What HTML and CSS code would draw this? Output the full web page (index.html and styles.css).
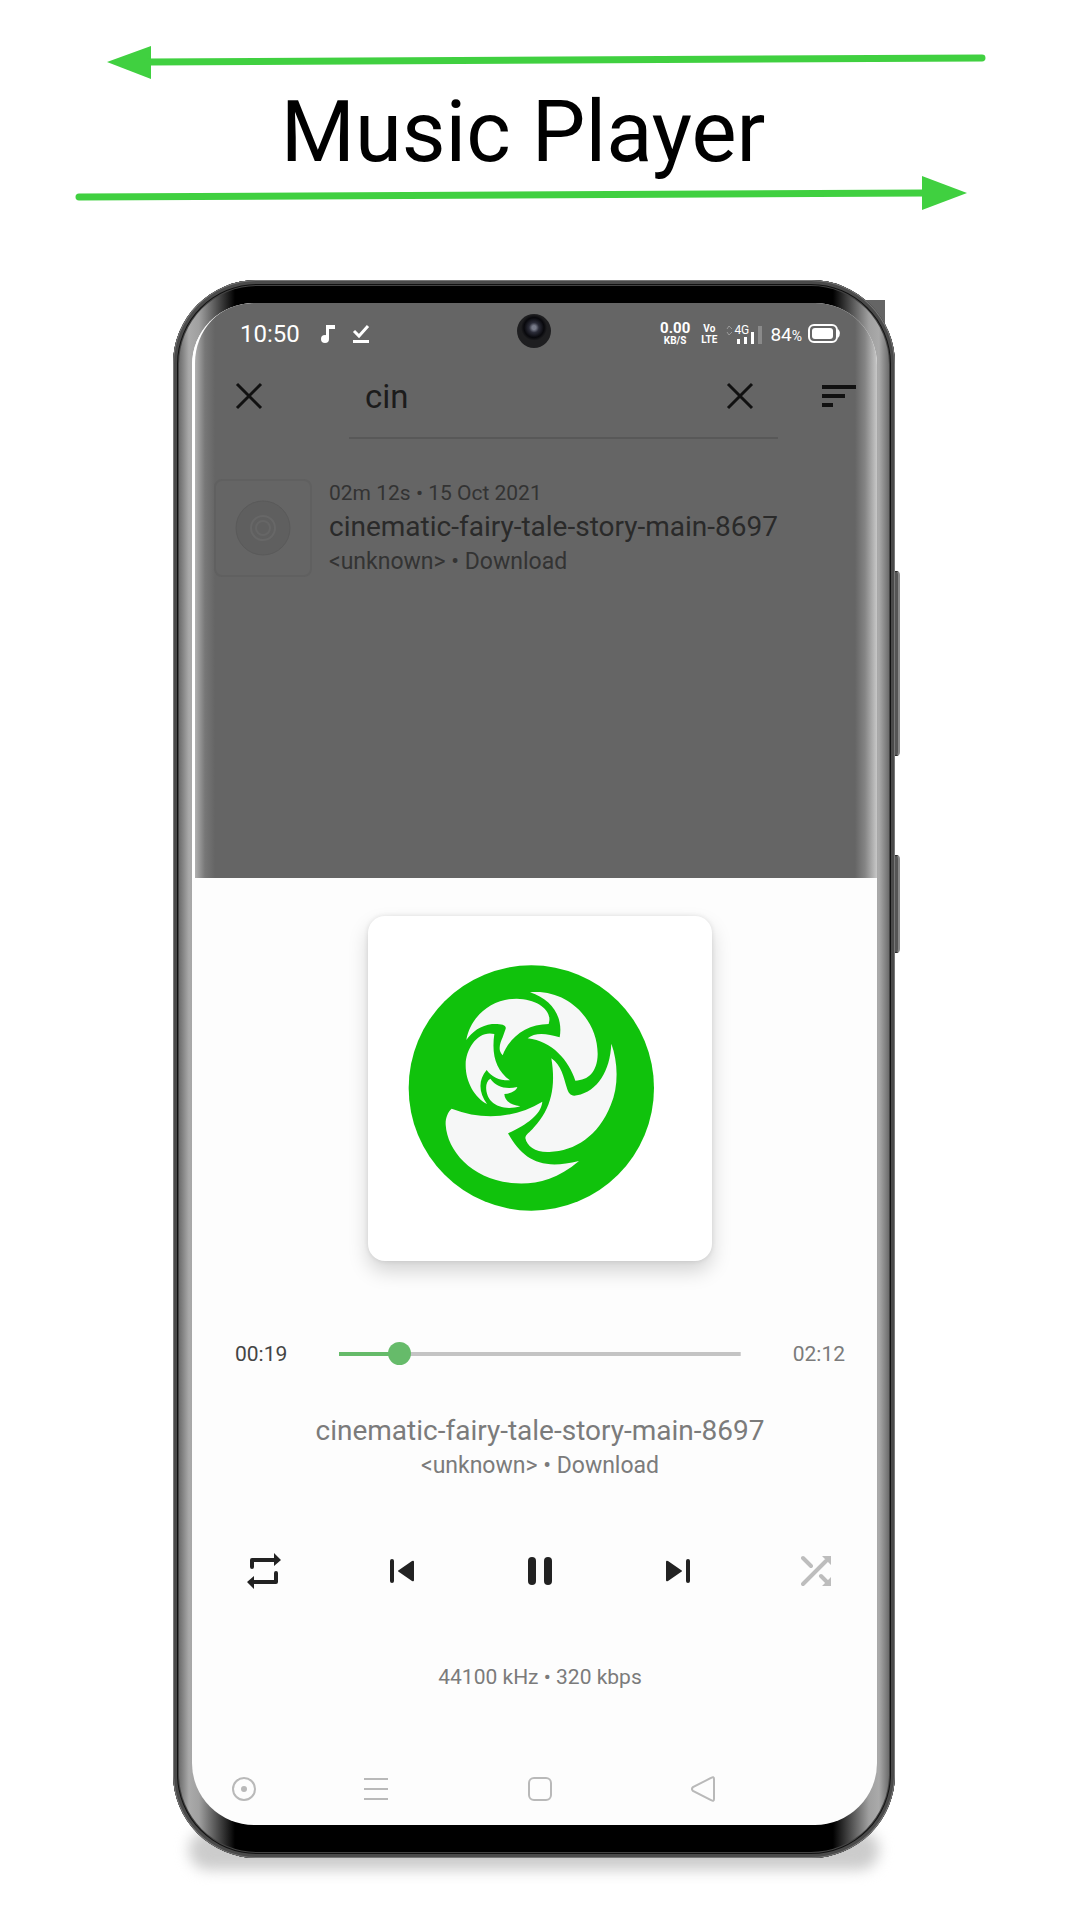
FILE: index.html
```html
<!DOCTYPE html>
<html lang="en">
<head>
<meta charset="utf-8">
<meta name="viewport" content="width=device-width, initial-scale=1">
<title>Music Player</title>
<link rel="stylesheet" href="styles.css">
</head>
<body>
<header class="banner">
  <svg class="arrow" viewBox="0 0 1080 34" aria-hidden="true"><path d="M107 16 151 0V33Z"/><path class="shaft" d="M148 16 982 12"/></svg>
  <h1 class="banner-title">Music Player</h1>
  <svg class="arrow" viewBox="0 0 1080 34" aria-hidden="true"><path d="M967 17 922 0V34Z"/><path class="shaft" d="M79 21 925 17"/></svg>
</header>

<main class="phone">
  <div class="edge-notch"></div>
  <div class="side-key volume"></div>
  <div class="side-key power"></div>
  <div class="bezel">
    <div class="screen">
      <section class="library">
        <div class="status-bar">
          <span class="clock">10:50</span>
          <svg class="note" width="16" height="20" viewBox="0 0 16 20" aria-hidden="true"><circle cx="5" cy="15" r="4"/><path d="M6 1h9v4H9v10H6Z"/></svg>
          <svg class="done" width="18" height="20" viewBox="0 0 18 20" aria-hidden="true"><path d="M2 7 7 12 16 2" fill="none" stroke="#fff" stroke-width="3"/><path d="M1 16h16v3H1Z"/></svg>
          <span class="net-speed"><b>0.00</b><small>KB/S</small></span>
          <span class="volte"><b>Vo</b><b>LTE</b></span>
          <span class="signal">
            <svg width="38" height="22" viewBox="0 0 38 22" aria-hidden="true"><path d="M1 6 3 3 6 6M1 9 3 12 6 9" fill="none" stroke="#999"/><path d="M11 16h3v5h-3ZM18 14h3v7h-3ZM25 9h3v12h-3Z"/><path d="M32 3h4v18h-4Z" fill="#8a8a8a"/></svg>
            <span class="net-type">4G</span>
          </span>
          <span class="charge">84<small>%</small></span>
          <svg class="battery" width="34" height="20" viewBox="0 0 34 20" aria-hidden="true"><rect x="1" y="1" width="28" height="17" rx="5" fill="none" stroke="#fff" stroke-width="2"/><rect x="4" y="4" width="21" height="11" rx="3"/><path d="M30 5q4 4 0 9Z"/></svg>
        </div>
        <span class="camera"></span>

        <div class="toolbar">
          <button class="icon-button" aria-label="Close"><svg width="28" height="28" viewBox="0 0 28 28"><path class="cross" d="M2 2 26 26M26 2 2 26"/></svg></button>
          <div class="search">
            <input class="search-input" type="text" value="cin" aria-label="Search">
            <button class="icon-button" aria-label="Clear"><svg width="28" height="28" viewBox="0 0 28 28"><path class="cross" d="M2 2 26 26M26 2 2 26"/></svg></button>
          </div>
          <button class="icon-button" aria-label="Sort"><svg width="34" height="24" viewBox="0 0 34 24"><path d="M0 1h34v4H0ZM0 10h23v4H0ZM0 19h11v4H0Z"/></svg></button>
        </div>

        <article class="track">
          <div class="thumb"><svg width="56" height="56" viewBox="0 0 56 56" aria-hidden="true"><circle cx="28" cy="28" r="27" fill="#5f5f5f" stroke="#5a5a5a"/><circle cx="28" cy="28" r="12" fill="none" stroke="#676767" stroke-width="2"/><circle cx="28" cy="28" r="7" fill="none" stroke="#666" stroke-width="2"/></svg></div>
          <div class="track-text">
            <p class="meta">02m 12s • 15 Oct 2021</p>
            <h2 class="title">cinematic-fairy-tale-story-main-8697</h2>
            <p class="artist">&lt;unknown&gt; • Download</p>
          </div>
        </article>
      </section>

      <section class="player">
        <div class="cover">
          <svg viewBox="54 48 1032 1034" aria-hidden="true">
            <circle cx="544" cy="564" r="368" fill="#10c20c"/>
            <g fill="#f6f7f7">
              <path d="M349 420C362 348 425 296 500 296C558 297 602 327 598 362L596 372C530 372 478 412 458 466C443 451 449 432 458 412L467 386C470 374 452 371 426 372C393 376 366 395 349 420Z"/>
              <path d="M540 277C655 266 744 361 743 463C742 516 715 541 676 542C657 482 606 423 533 415C553 397 589 399 629 412C640 351 607 299 540 277Z"/>
              <path d="M784 431C804 486 807 558 782 616C746 707 675 754 598 756C557 758 531 739 526 714C527 703 538 699 552 682C605 626 618 558 604 475C634 495 641 533 650 562C656 583 664 590 681 586C743 573 780 514 784 431Z"/>
              <path d="M305 626C400 663 495 654 577 605C573 644 532 673 474 700C520 781 573 811 687 783C615 844 548 855 484 849C365 836 292 753 287 674C286 656 293 636 305 626Z"/>
              <path d="M433 402C385 390 348 444 347 493C346 544 373 592 411 612C386 578 384 540 410 510C426 532 448 542 480 541C438 510 424 465 433 402Z"/>
              <path d="M421 536C401 548 407 586 424 604C446 626 480 628 511 619C480 615 464 601 463 582C483 580 498 573 502 561C467 568 440 562 421 536Z"/>
            </g>
          </svg>
        </div>

        <div class="seek">
          <span class="time elapsed">00:19</span>
          <input class="slider" type="range" min="0" max="132" value="17" aria-label="Position">
          <span class="time">02:12</span>
        </div>

        <div class="now-playing">
          <h2 class="title">cinematic-fairy-tale-story-main-8697</h2>
          <p class="artist">&lt;unknown&gt; • Download</p>
        </div>

        <div class="controls">
          <button class="icon-button" aria-label="Repeat"><svg width="34" height="36" viewBox="0 0 34 36"><path d="M5 14V7H28M29 20V29H6" fill="none" stroke="#222" stroke-width="4" stroke-linecap="round" stroke-linejoin="round"/><path d="M27 0 34 7 27 13ZM7 23 0 29 7 36Z"/></svg></button>
          <button class="icon-button" aria-label="Previous"><svg width="24" height="24" viewBox="0 0 24 24"><rect x="0" y="0" width="4" height="24" rx="2"/><path d="M22 2q2-1 2 1v18q0 2-2 1L9 13q-2-1 0-2Z"/></svg></button>
          <button class="icon-button" aria-label="Pause"><svg width="24" height="28" viewBox="0 0 24 28"><rect width="8" height="28" rx="4"/><rect x="16" width="8" height="28" rx="4"/></svg></button>
          <button class="icon-button" aria-label="Next"><svg width="24" height="24" viewBox="0 0 24 24"><rect x="20" y="0" width="4" height="24" rx="2"/><path d="M2 2Q0 1 0 3v18q0 2 2 1L15 13q2-1 0-2Z"/></svg></button>
          <button class="icon-button off" aria-label="Shuffle"><svg width="30" height="32" viewBox="0 0 30 32"><path d="M2 3 10 11M2 29 25 6M20 21 26 27" fill="none" stroke="#bdbdbd" stroke-width="4" stroke-linecap="round"/><path d="M21 1h9v9ZM30 22v9h-9Z"/></svg></button>
        </div>

        <p class="quality">44100 kHz • 320 kbps</p>

        <nav class="nav-bar" aria-label="System">
          <button class="icon-button" aria-label="Assist"><svg width="24" height="24" viewBox="0 0 24 24"><circle cx="12" cy="12" r="11"/><circle cx="12" cy="12" r="3" fill="#b9b9b9" stroke="none"/></svg></button>
          <button class="icon-button" aria-label="Recents"><svg width="24" height="24" viewBox="0 0 24 24"><path d="M0 2H24M0 12H24M0 22H24"/></svg></button>
          <button class="icon-button" aria-label="Home"><svg width="24" height="24" viewBox="0 0 24 24"><rect x="1" y="1" width="22" height="22" rx="5"/></svg></button>
          <button class="icon-button" aria-label="Back"><svg width="24" height="26" viewBox="0 0 24 26"><path d="M20 2Q23 0 23 3V23Q23 26 20 24L2 15Q0 13 2 11Z"/></svg></button>
        </nav>
      </section>
    </div>
  </div>
</main>
</body>
</html>
```
FILE: styles.css
```css
* { box-sizing: border-box; }

body {
  margin: 0;
  padding: 46px 0 60px;
  background: #fff;
  font-family: Roboto, "Noto Sans", sans-serif;
  color: #7b7b7b;
}

h1, h2, p { margin: 0; font-weight: 400; }

/* Banner */
.banner { text-align: center; }
.arrow { display: block; width: 100%; height: auto; fill: #40d040; }
.shaft { fill: none; stroke: #40d040; stroke-width: 7; stroke-linecap: round; }
.banner-title {
  margin: 10px 0 1px;
  padding-right: 34px;
  font-size: 85px;
  line-height: 85px;
  color: #000;
}

/* Phone body */
.phone {
  position: relative;
  max-width: 722px;
  margin: 70px auto 0;
  left: -6px;
}
.phone::after {
  content: "";
  position: absolute;
  z-index: -1;
  inset: auto 16px -12px;
  height: 40px;
  border-radius: 20px;
  background: #ccc;
  filter: blur(7px);
}
.edge-notch {
  position: absolute;
  top: 20px;
  right: 10px;
  width: 60px;
  height: 60px;
  background: #656565;
}
.side-key {
  position: absolute;
  right: -5px;
  width: 8px;
  border-radius: 4px;
  border: 1px solid #222;
  border-right: 2px solid #888;
  background: #555;
}
.volume { top: 291px; height: 185px; }
.power { top: 575px; height: 98px; }

.bezel {
  position: relative;
  padding: 23px 18px 33px 19px;
  border-radius: 84px;
  background: linear-gradient(to right, #666 5px, #aaa 16px, #a0a0a0 26px, #000 62px, #000 calc(100% - 62px), #a0a0a0 calc(100% - 26px), #aaa calc(100% - 16px), #666 calc(100% - 5px));
  box-shadow: inset 0 0 0 1px #777, inset 0 0 0 4px #4a4a4a, inset 0 0 0 5px #111, inset 0 0 0 6px #444;
}

.screen {
  position: relative;
  overflow: hidden;
  border-radius: 62px;
  background: #fdfdfd;
}

/* Dimmed library behind the sheet */
.library {
  padding-bottom: 299px;
  border-left: 3px solid #fff;
  border-radius: 60px 0 0 0;
  background: linear-gradient(to right, #b0b0b0, #777 10px, #656565 20px, #656565 calc(100% - 22px), #858585 calc(100% - 12px), #c8c8c8 100%);
}
.status-bar {
  display: flex;
  align-items: center;
  height: 62px;
  padding: 0 35px 0 45px;
  color: #fff;
  fill: #fff;
}
.clock { font-size: 24px; }
.note { margin-left: 20px; }
.done { margin-left: 16px; }
.net-speed, .volte {
  display: flex;
  flex-direction: column;
  align-items: center;
}
.net-speed { margin-left: auto; }
.net-speed b { font-size: 15px; line-height: 14px; }
.net-speed small { font-size: 10px; line-height: 12px; font-weight: 700; }
.volte { margin-left: 11px; font-size: 10px; line-height: 11px; }
.signal { position: relative; display: flex; margin-left: 9px; }
.net-type { position: absolute; left: 8px; top: 0; font-size: 12px; line-height: 14px; }
.charge { margin-left: 6px; font-size: 19px; }
.charge small { font-size: 14px; }
.battery { margin-left: 6px; }
.camera {
  position: absolute;
  top: 11px;
  left: 50%;
  width: 34px;
  height: 34px;
  margin-left: -18px;
  border-radius: 50%;
  background: radial-gradient(circle at 50% 40%, #777a88 0 2px, #2b2c38 5px, #08080c 10px, #1e1e20 13px);
}

.icon-button {
  display: flex;
  flex: none;
  align-items: center;
  justify-content: center;
  width: 48px;
  height: 48px;
  padding: 0;
  border: 0;
  background: none;
  fill: #222;
}
.cross { fill: none; stroke: #111; stroke-width: 3; }

.toolbar {
  display: flex;
  padding: 0 14px 0 30px;
}
.toolbar .icon-button { height: 62px; fill: #111; }
.search {
  display: flex;
  flex: 1;
  min-width: 0;
  margin: 0 37px 0 76px;
  padding: 0 14px 10px 16px;
  border-bottom: 2px solid #585858;
}
.search-input {
  flex: 1;
  min-width: 0;
  height: 62px;
  padding: 0;
  border: 0;
  outline: 0;
  background: none;
  font: 33px Roboto, "Noto Sans", sans-serif;
  color: #1c1c1c;
}

.track {
  display: flex;
  align-items: center;
  gap: 17px;
  margin-top: 38px;
  padding-left: 19px;
  color: #333;
}
.thumb {
  display: grid;
  place-items: center;
  width: 98px;
  height: 98px;
  border: 2px solid #606060;
  border-radius: 8px;
}
.track .title { color: #2a2a2a; }
.meta { font-size: 21px; line-height: 32px; }
.title { font-size: 28px; line-height: 36px; }
.artist { font-size: 23px; line-height: 34px; }

/* Player sheet */
.player {
  padding: 38px 0 12px;
  text-align: center;
}
.cover {
  width: 344px;
  margin: 0 auto;
  border-radius: 17px;
  background: #fff;
  box-shadow: 0 10px 20px rgba(0, 0, 0, .17), 0 0 5px rgba(0, 0, 0, .1);
  position: relative;
  left: 5px;
}
.cover svg { display: block; width: 100%; }

.seek {
  display: flex;
  align-items: center;
  gap: 52px;
  margin-top: 78px;
  padding: 0 32px 0 43px;
}
.time { font-size: 21px; line-height: 30px; }
.elapsed { color: #444; }
.slider {
  flex: 1;
  min-width: 0;
  height: 30px;
  margin: 0;
  appearance: none;
  background: linear-gradient(to right, #66bb6a 15%, #c4c4c4 15%) center / 100% 4px no-repeat;
}
.slider::-webkit-slider-thumb {
  appearance: none;
  width: 23px;
  height: 23px;
  border-radius: 50%;
  background: #66bb6a;
}

.now-playing { margin-top: 44px; padding-left: 11px; }
.controls {
  display: flex;
  justify-content: space-between;
  margin-top: 64px;
  padding: 0 37px 0 48px;
}
.icon-button.off { fill: #bdbdbd; }
.quality {
  margin-top: 67px;
  padding-left: 11px;
  font-size: 21px;
  line-height: 30px;
}
.nav-bar {
  display: grid;
  grid-template-columns: 132fr 164fr 163fr 198fr;
  margin-top: 73px;
  padding-left: 28px;
}
.nav-bar .icon-button { fill: none; stroke: #b9b9b9; stroke-width: 2; }
```
